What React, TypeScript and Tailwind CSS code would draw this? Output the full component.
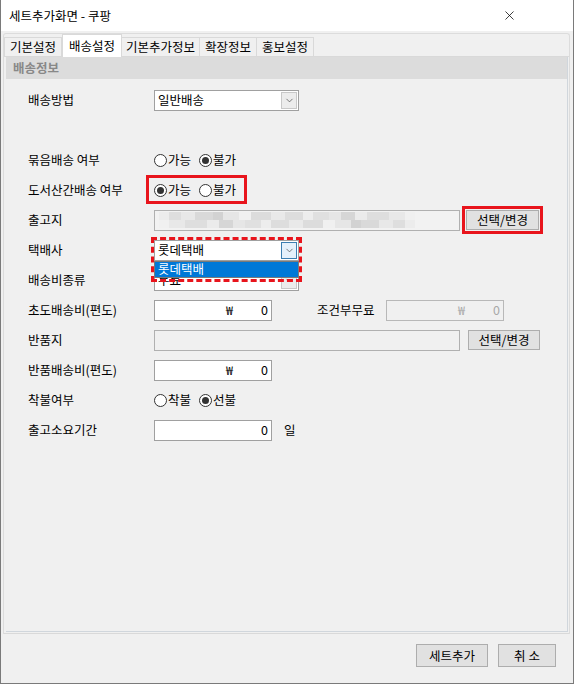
import { X, ChevronDown } from "lucide-react";

const Radio = ({ checked, label }: { checked?: boolean; label: string }) => (
  <span className="flex items-center gap-[1px]">
    <span className="w-[13px] h-[13px] rounded-full border border-[#333] bg-white flex items-center justify-center">
      {checked && <span className="w-[7px] h-[7px] rounded-full bg-[#333]" />}
    </span>
    <span>{label}</span>
  </span>
);

const Select = ({ value, focused }: { value: string; focused?: boolean }) => (
  <div className="w-[145px] h-[21px] border border-[#a0a0a0] bg-white flex items-center justify-between pl-[3px] pr-[1px]">
    <span>{value}</span>
    <span
      className={
        focused
          ? "w-[16px] h-[17px] border border-[#3c7fb1] bg-[#e5f1fb] flex items-center justify-center"
          : "w-[16px] h-[17px] border border-[#c8c8c8] bg-[#ececec] flex items-center justify-center"
      }
    >
      <ChevronDown size={11} strokeWidth={1.5} className="text-[#444]" />
    </span>
  </div>
);

const MoneyInput = ({ disabled }: { disabled?: boolean }) => (
  <div
    className={
      disabled
        ? "w-[118px] h-[21px] border border-[#b8b8b8] bg-[#f0f0f0] text-[#a8a8a8] flex items-center justify-end gap-[28px] pr-[3px]"
        : "w-[118px] h-[21px] border border-[#a0a0a0] bg-white flex items-center justify-end gap-[28px] pr-[3px]"
    }
  >
    <span>₩</span>
    <span>0</span>
  </div>
);

const Btn = ({ label, w }: { label: string; w: string }) => (
  <div className={`${w} h-[20px] border border-[#adadad] bg-[#e1e1e1] flex items-center justify-center`}>{label}</div>
);

const Row = ({ label, children }: { label: string; children?: React.ReactNode }) => (
  <div className="h-[30px] flex items-center">
    <div className="w-[126px]">{label}</div>
    {children}
  </div>
);

const mosaic = [
  "w-[10px] bg-[#ececec]", "w-[12px] bg-[#dedede]", "w-[14px] bg-[#e8e8e8]", "w-[18px] bg-[#d9d9d9]",
  "w-[10px] bg-[#d2d2d2]", "w-[16px] bg-[#e6e6e6]", "w-[12px] bg-[#f0f0f0]", "w-[20px] bg-[#dcdcdc]",
  "w-[14px] bg-[#e9e9e9]", "w-[18px] bg-[#dddddd]", "w-[10px] bg-[#ededed]", "w-[16px] bg-[#e0e0e0]",
  "w-[12px] bg-[#e6e6e6]", "w-[14px] bg-[#d6d6d6]", "w-[12px] bg-[#ebebeb]", "w-[22px] bg-[#dedede]",
  "w-[16px] bg-[#e8e8e8]", "w-[10px] bg-[#f0f0f0]",
];

export default function App() {
  return (
    <div className="w-[574px] h-[684px] bg-[#f0f0f0] border-x border-b border-[#7a7a7a] flex flex-col text-[12.5px] leading-[16px] text-black font-['Noto_Sans_CJK_KR','Noto_Sans',sans-serif]">
      {/* title bar */}
      <div className="h-[31px] bg-white flex items-center justify-between pl-[8px] pr-[56px]">
        <span>세트추가화면 - 쿠팡</span>
        <X size={15} strokeWidth={1.2} />
      </div>

      {/* tab control */}
      <div className="mt-[2px] ml-[2px] w-[567px] border-x border-t border-[#dcdcdc] rounded-t-[3px] flex flex-col">
        <div className="h-[22px] flex items-end">
          <div className="h-[19px] px-[5px] border border-b-0 border-[#d9d9d9] flex items-center">기본설정</div>
          <div className="h-[23px] -mb-[1px] px-[6px] border border-b-0 border-[#d9d9d9] bg-white flex items-center z-10">배송설정</div>
          <div className="h-[19px] px-[4px] border border-l-0 border-b-0 border-[#d9d9d9] flex items-center">기본추가정보</div>
          <div className="h-[19px] px-[5px] border border-l-0 border-b-0 border-[#d9d9d9] flex items-center">확장정보</div>
          <div className="h-[19px] px-[5px] border border-l-0 border-b-0 border-[#d9d9d9] flex items-center">홍보설정</div>
        </div>
        <div className="h-[578px] border-t border-b border-[#d9d9d9] bg-[#f0f0f0] pl-[2px] pr-[1px] pb-[1px]">
          <div className="h-full border-r border-b border-[#d0d6dc] flex flex-col">
            <div className="h-[22px] bg-[#dcdcdc] flex items-center pl-[7px] font-bold text-[#888888]">배송정보</div>

            <div className="pt-[6px] pl-[22px] flex flex-col">
              <Row label="배송방법">
                <Select value="일반배송" />
              </Row>
              <div className="h-[30px]" />
              <Row label="묶음배송 여부">
                <div className="flex items-center gap-[8px]">
                  <Radio label="가능" />
                  <Radio checked label="불가" />
                </div>
              </Row>
              <Row label="도서산간배송 여부">
                <div className="relative flex items-center gap-[8px]">
                  <Radio checked label="가능" />
                  <Radio label="불가" />
                  <span className="absolute -left-[8px] -top-[7px] w-[101px] h-[29px] border-[3px] border-[#e8141c]" />
                </div>
              </Row>
              <Row label="출고지">
                <div className="w-[306px] h-[21px] border border-[#b0b0b0] bg-[#f2f2f2] flex flex-col justify-center pl-[4px]">
                  <div className="flex h-[8px]">
                    {mosaic.map((c, i) => (
                      <span key={i} className={`h-full ${c}`} />
                    ))}
                  </div>
                  <div className="flex h-[8px]">
                    {mosaic.slice().reverse().map((c, i) => (
                      <span key={i} className={`h-full ${c}`} />
                    ))}
                  </div>
                </div>
                <div className="relative ml-[6px]">
                  <Btn label="선택/변경" w="w-[73px]" />
                  <span className="absolute -left-[4px] -top-[4px] w-[81px] h-[28px] border-[3px] border-[#e8141c]" />
                </div>
              </Row>
              <Row label="택배사">
                <div className="relative">
                  <Select value="롯데택배" focused />
                  <div className="absolute left-0 top-[21px] w-[145px] h-[17px] border border-[#7a7a7a] bg-[#0078d7] text-white flex items-center pl-[3px] z-20">
                    롯데택배
                  </div>
                  <span className="absolute -left-[3px] -top-[3px] w-[151px] h-[45px] border-[3px] border-dashed border-[#e8141c] z-30" />
                </div>
              </Row>
              <Row label="배송비종류">
                <Select value="무료" />
              </Row>
              <Row label="초도배송비(편도)">
                <MoneyInput />
                <span className="ml-[45px] w-[69px]">조건부무료</span>
                <MoneyInput disabled />
              </Row>
              <Row label="반품지">
                <div className="w-[306px] h-[21px] border border-[#b0b0b0] bg-[#f0f0f0]" />
                <div className="ml-[8px]">
                  <Btn label="선택/변경" w="w-[72px]" />
                </div>
              </Row>
              <Row label="반품배송비(편도)">
                <MoneyInput />
              </Row>
              <Row label="착불여부">
                <div className="flex items-center gap-[8px]">
                  <Radio label="착불" />
                  <Radio checked label="선불" />
                </div>
              </Row>
              <Row label="출고소요기간">
                <div className="w-[118px] h-[21px] border border-[#a0a0a0] bg-white flex items-center justify-end pr-[3px]">0</div>
                <span className="ml-[12px]">일</span>
              </Row>
            </div>
          </div>
        </div>
      </div>

      {/* footer */}
      <div className="flex justify-end gap-[10px] pr-[17px] pt-[10px]">
        <div className="w-[72px] h-[23px] border border-[#adadad] bg-[#e1e1e1] flex items-center justify-center">세트추가</div>
        <div className="w-[58px] h-[23px] border border-[#adadad] bg-[#e1e1e1] flex items-center justify-center">취 소</div>
      </div>
    </div>
  );
}
